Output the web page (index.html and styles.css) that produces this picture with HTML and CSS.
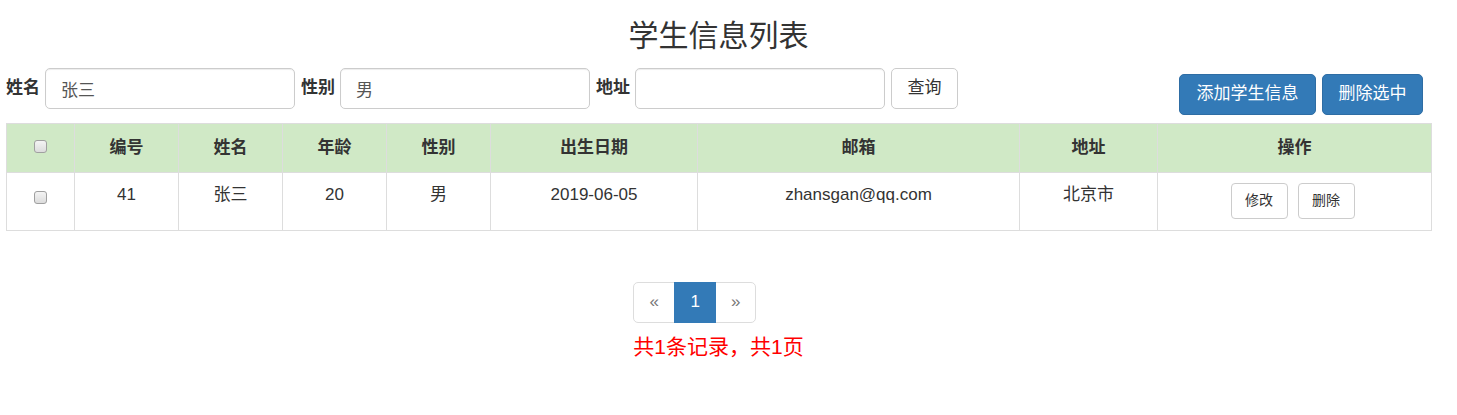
FILE: index.html
```html
<!DOCTYPE html>
<html lang="zh-CN">
<head>
<meta charset="utf-8">
<title>学生信息列表</title>
<link rel="stylesheet" href="styles.css">
</head>
<body>
<div class="container">
  <h3 class="title">学生信息列表</h3>
  <div class="toolbar">
    <form class="search">
      <label class="lbl">姓名</label>
      <input class="field" type="text" value="张三">
      <label class="lbl">性别</label>
      <input class="field" type="text" value="男">
      <label class="lbl">地址</label>
      <input class="field" type="text" value="">
      <button type="button" class="btn btn-default">查询</button>
    </form>
    <div class="actions">
      <button type="button" class="btn btn-primary">添加学生信息</button>
      <button type="button" class="btn btn-primary">删除选中</button>
    </div>
  </div>
  <table class="grid">
    <colgroup>
      <col style="width:68px"><col style="width:104px"><col style="width:104px"><col style="width:104px"><col style="width:104px"><col style="width:207px"><col style="width:322px"><col style="width:138px"><col style="width:274px">
    </colgroup>
    <thead>
      <tr class="head">
        <th><input type="checkbox" class="chk"></th>
        <th>编号</th><th>姓名</th><th>年龄</th><th>性别</th><th>出生日期</th><th>邮箱</th><th>地址</th><th>操作</th>
      </tr>
    </thead>
    <tbody>
      <tr>
        <td><input type="checkbox" class="chk"></td>
        <td>41</td><td>张三</td><td>20</td><td>男</td><td>2019-06-05</td><td>zhansgan@qq.com</td><td>北京市</td>
        <td class="ops"><button type="button" class="btn btn-sm">修改</button><button type="button" class="btn btn-sm">删除</button></td>
      </tr>
    </tbody>
  </table>
  <div class="pager-wrap">
    <div class="pager-box">
      <ul class="pagination">
        <li class="pg pg-first">«</li>
        <li class="pg active">1</li>
        <li class="pg pg-last">»</li>
      </ul>
      <div class="summary">共1条记录，共1页</div>
    </div>
  </div>
</div>
</body>
</html>
```
FILE: styles.css
```css
* { box-sizing: border-box; }
html, body { margin: 0; padding: 0; background: #fff; }
body {
  font-family: "Liberation Sans", "Noto Sans CJK SC", sans-serif;
  font-size: 17px;
  line-height: 1.42857;
  color: #333;
}
.container { width: 1425px; margin-left: 6px; }
.title {
  margin: 0;
  padding-top: 18px;
  font-size: 30px;
  font-weight: 400;
  line-height: 36px;
  text-align: center;
  color: #333;
}
.toolbar {
  display: flex;
  justify-content: space-between;
  align-items: flex-start;
  margin-top: 14px;
  padding-right: 8px;
}
.search { display: flex; align-items: center; margin: 0; }
.lbl { font-weight: 700; font-size: 17px; margin-right: 5px; }
.field {
  width: 250px;
  height: 41px;
  margin-right: 6px;
  padding: 0 15px;
  border: 1px solid #ccc;
  border-radius: 5px;
  font: inherit;
  color: #555;
  box-shadow: inset 0 1px 1px rgba(0,0,0,.075);
}
.btn {
  display: inline-flex;
  align-items: center;
  justify-content: center;
  height: 41px;
  padding: 0;
  border: 1px solid #ccc;
  border-radius: 5px;
  background: #fff;
  color: #333;
  font: inherit;
  font-size: 17px;
  white-space: nowrap;
}
.search .btn { width: 67px; }
.actions { display: flex; gap: 6px; margin-top: 6px; }
.btn-primary { background: #337ab7; border-color: #2e6da4; color: #fff; }
.actions .btn-primary:first-child { width: 137px; }
.actions .btn-primary:last-child { width: 101px; }
.grid {
  margin-top: 8px;
  width: 1425px;
  border-collapse: collapse;
  table-layout: fixed;
}
.grid th, .grid td {
  border: 1px solid #ddd;
  text-align: center;
}
.grid th {
  height: 49px;
  padding: 0 10px;
  font-weight: 700;
  background: #d0e9c6;
  vertical-align: middle;
}
.grid td {
  height: 58px;
  padding: 10px 10px;
  vertical-align: top;
}
.chk {
  -webkit-appearance: none;
  appearance: none;
  display: inline-block;
  width: 13px;
  height: 13px;
  margin: 0 1px 0 0;
  vertical-align: middle;
  border: 1px solid #a0a0a0;
  border-radius: 3px;
  background: linear-gradient(#f4f4f4, #dcdcdc);
}
.grid th .chk { margin-top: -3px; }
.grid td .chk { margin-top: 3px; }
.ops { padding-left: 6px !important; padding-right: 10px !important; }
.btn-sm {
  height: 36px;
  width: 57px;
  font-size: 14px;
  border-radius: 4px;
  margin: 0 5px;
}
.pager-wrap { display: flex; justify-content: center; margin-top: 51px; }
.pager-box { display: flex; flex-direction: column; align-items: flex-start; }
.pagination {
  display: flex;
  list-style: none;
  margin: 0;
  padding: 0;
}
.pg {
  width: 42px;
  height: 41px;
  display: flex;
  align-items: center;
  justify-content: center;
  border: 1px solid #ddd;
  color: #777;
  font-size: 17px;
  margin-left: -1px;
}
.pg-first { margin-left: 0; border-radius: 5px 0 0 5px; width: 42px; }
.pg-last { border-radius: 0 5px 5px 0; width: 41px; }
.pg.active { background: #337ab7; border-color: #337ab7; color: #fff; z-index: 1; }
.summary {
  margin-top: 10px;
  color: #f00;
  font-size: 21px;
  line-height: 28px;
}
```
